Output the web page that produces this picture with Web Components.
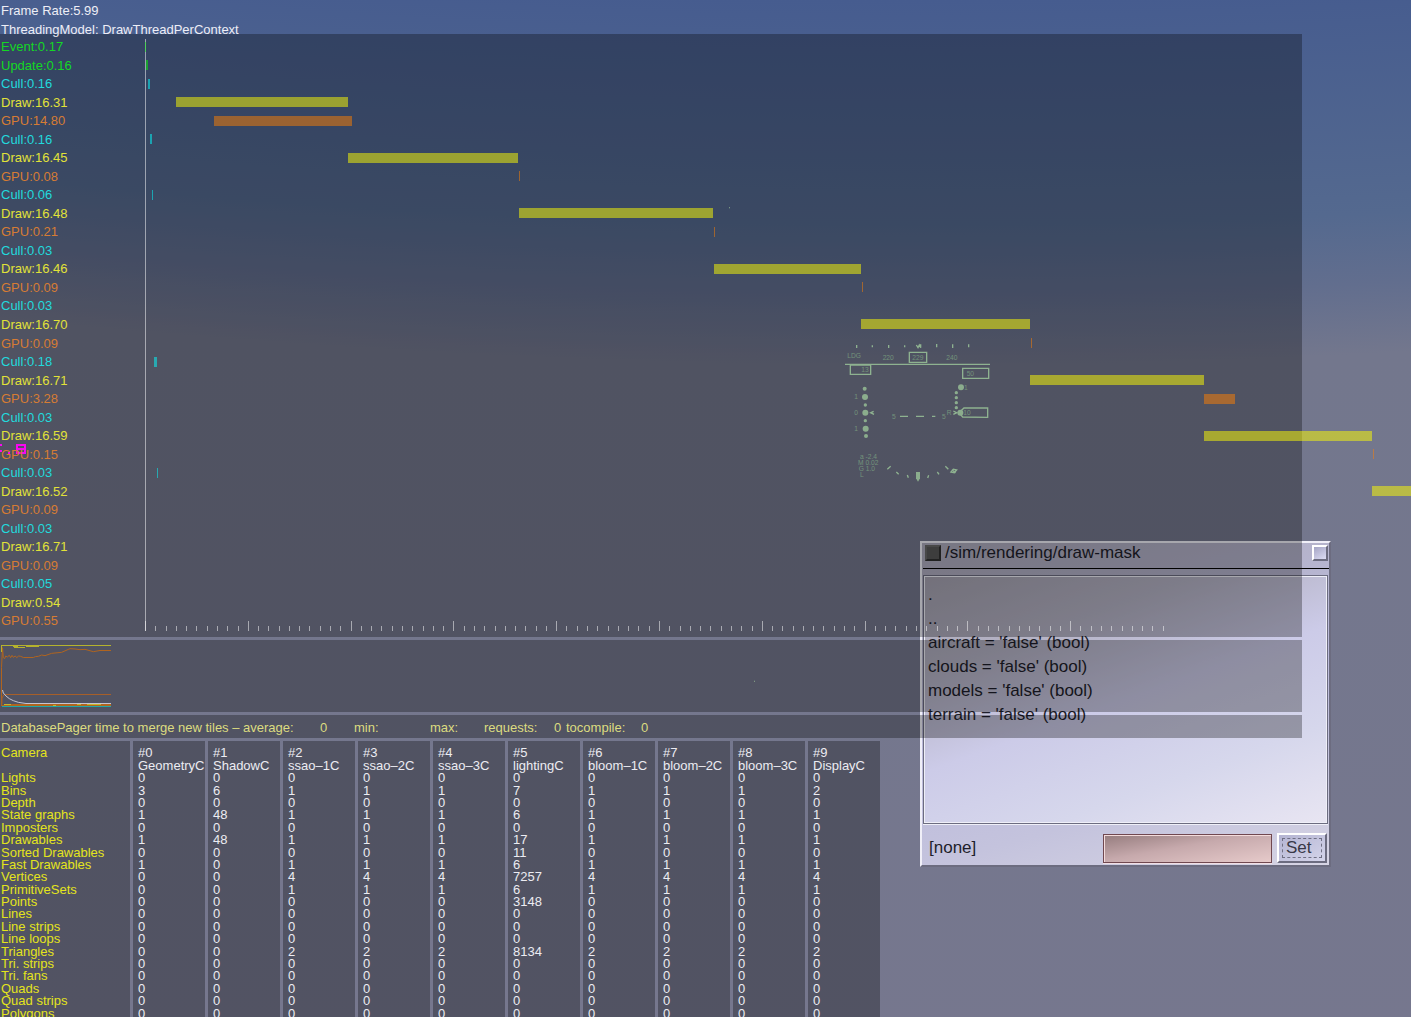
<!DOCTYPE html>
<html lang="en">
<head>
<meta charset="utf-8">
<title>Frame statistics</title>
<style>
html,body{margin:0;height:100%;overflow:hidden}
body{font:13px/18px "Liberation Sans",Arial,sans-serif;--shade:rgba(0,0,0,.3)}
</style>
</head>
<body>
<sim-view>
  <flight-hud slot="world"></flight-hud>
  <property-dialog slot="world" heading="/sim/rendering/draw-mask"></property-dialog>
  <frame-header></frame-header>
  <thread-timeline></thread-timeline>
  <history-graph></history-graph>
  <pager-stats></pager-stats>
  <camera-stats></camera-stats>
</sim-view>
<script>
class Base extends HTMLElement {
  constructor() {
    super();
    this.attachShadow({ mode: 'open' });
  }
  connectedCallback() { this.shadowRoot.innerHTML = this.render(); }
}

customElements.define('sim-view', class extends Base {
  render() {
    return `<style>
      :host{display:block;position:relative;height:100%;overflow:hidden;
        background:radial-gradient(circle at 65% -8635px,#465c8f 8635px,#54698f 8860px,#626e8e 8930px,#73778d 9000px,#76778e 9700px)}
      .stats{position:relative;display:flex;flex-direction:column;gap:3px;pointer-events:none}
    </style>
    <slot name="world"></slot>
    <div class="stats"><slot></slot></div>`;
  }
});

customElements.define('frame-header', class extends Base {
  render() {
    return `<style>
      :host{display:block;height:34px;margin-bottom:-4px;padding:1px 1px 0;box-sizing:content-box;color:#eeeef6;white-space:nowrap;position:relative;z-index:1}
      :host{height:33px;margin-bottom:-3px;line-height:19px}
      p{margin:0}
    </style><p>Frame Rate:5.99</p><p>ThreadingModel: DrawThreadPerContext</p>`;
  }
});

customElements.define('thread-timeline', class extends Base {
  render() {
    const cams = [['0.16','16.31','14.80'],['0.16','16.45','0.08'],['0.06','16.48','0.21'],['0.03','16.46','0.09'],['0.03','16.70','0.09'],
      ['0.18','16.71','3.28'],['0.03','16.59','0.15'],['0.03','16.52','0.09'],['0.03','16.71','0.09'],['0.05','0.54','0.55']];
    const rows = [['event','Event:0.17'],['event','Update:0.16']];
    for (const [c, d, g] of cams) rows.push(['cull','Cull:' + c],['draw','Draw:' + d],['gpu','GPU:' + g]);
    // Each bar: row, start and length along the time axis
    const bars = [[0,0,1],[1,1,2],[2,3,2],[3,31,172],[4,69,138],[5,5,2],[6,203,170],[7,374,1],[8,7,1],[9,374,194],[10,569,1],
      [12,569,147],[13,717,1],[15,716,169],[16,886,1],[17,9,3],[18,885,174],[19,1059,31],[21,1059,168],[22,1228,1],[23,12,1],[24,1227,170]];
    let shapes = bars.map(([r, x, w]) =>
      `<rect class="${rows[r][0]}" x="${x}" y="${Math.floor(593 * r / 32) + 4}" width="${w}" height="10"/>`).join('');
    for (let i = 0; i < 100; i++) {
      const major = i % 10 === 0;
      shapes += `<rect class="tick" x="${Math.round(i * 10.28)}" y="${major ? 583 : 588}" width="1" height="${major ? 10 : 5}"/>`;
    }
    return `<style>
      :host{display:grid;grid-template-columns:145px 1fr;width:calc(100% - 109px);box-sizing:border-box;padding:4px 0 6px;background:var(--shade)}
      ol{list-style:none;margin:0;padding:0 0 0 1px;display:grid;grid-template-rows:repeat(32,1fr);height:593px;z-index:1}
      li{line-height:18px}
      li.event{color:#14d824}li.cull{color:#22dadd}li.draw{color:#e2e238}li.gpu{color:#d67c34}
      svg{display:block;width:100%;height:593px;overflow:visible;shape-rendering:crispEdges}
      rect.event{fill:#00ff00;opacity:.5}rect.cull{fill:#00ffff;opacity:.5}rect.draw{fill:#ffff00;opacity:.5}rect.gpu{fill:#ff8000;opacity:.5}
      .tick,.axis{fill:#fff;opacity:.5}
      .marker{fill:none;stroke:#f808f0;stroke-width:2}
    </style>
    <ol>${rows.map(([k, t]) => `<li class="${k}">${t}</li>`).join('')}</ol>
    <svg aria-hidden="true">
      <path class="marker" d="M-128 407h8v8h-8zM-128 411h8M-145 407h2M-145 413h2M-137 415h2"/>
      <rect class="axis" x="0" y="1" width="1" height="592"/>${shapes}
    </svg>`;
  }
});

customElements.define('history-graph', class extends Base {
  render() {
    return `<style>
      :host{display:block;width:calc(100% - 109px);height:72px;background:var(--shade)}
      svg{display:block}
      path{fill:none;stroke-width:3}
      .flat{shape-rendering:crispEdges}
    </style>
    <svg width="120" height="72" viewBox="0 12 360 216" aria-hidden="true">
      <path stroke="#b0641f" d="M4.5 207V95L7.5 35L10 65L14 68L17 60L22 63L28 58L32 65L36 58L40 64L46 60L50 65L56 60L62 61L70 64.5H100L106 62L115 61L125 57L135 59L155 52L185 49L210 38L225 39L240 41L255 40L280 47L300 43.5H333"/>
      <path stroke="#a65f29" d="M6 205V186L12 175.5H333"/>
      <g class="flat">
      <path stroke="#b5b32d" d="M4.5 47V28.5H333M39 31.5H54M42 34.5H75M77 31.5H117"/>
      <path stroke="#b0651f" d="M4 208.5H333M12 205.5H333"/>
      <path stroke="#c8b52a" d="M12 205.5H33M158 208.5H168M232 205.5H243M261 205.5H302"/>
      <path stroke="#20a8a6" d="M7 211.5H333"/>
      </g>
      <path stroke="#c4c4d2" d="M7.5 162L10 171L18 180L28 188L40 194L55 199L78 202.5H333"/>
    </svg>`;
  }
});

customElements.define('pager-stats', class extends Base {
  render() {
    return `<style>
      :host{display:grid;grid-template-columns:319px 34px 76px 54px 70px 12px 75px auto;align-items:center;width:calc(100% - 109px);
        height:23px;box-sizing:border-box;padding:3px 0 0 1px;background:var(--shade);color:#dcdc80;white-space:nowrap}
    </style>
    <span>DatabasePager time to merge new tiles – average:</span><span>0</span><span>min:</span><span>max:</span>
    <span>requests:</span><span>0</span><span>tocompile:</span><span>0</span>`;
  }
});

customElements.define('camera-stats', class extends Base {
  render() {
    const names = ['GeometryC','ShadowC','ssao–1C','ssao–2C','ssao–3C','lightingC','bloom–1C','bloom–2C','bloom–3C','DisplayC'];
    const z = '0 0 0 0 0 0 0 0 0 0';
    const data = [['Lights',z],['Bins','3 6 1 1 1 7 1 1 1 2'],['Depth',z],['State graphs','1 48 1 1 1 6 1 1 1 1'],['Imposters',z],
      ['Drawables','1 48 1 1 1 17 1 1 1 1'],['Sorted Drawables','0 0 0 0 0 11 0 0 0 0'],['Fast Drawables','1 0 1 1 1 6 1 1 1 1'],
      ['Vertices','0 0 4 4 4 7257 4 4 4 4'],['PrimitiveSets','0 0 1 1 1 6 1 1 1 1'],['Points','0 0 0 0 0 3148 0 0 0 0'],
      ['Lines',z],['Line strips',z],['Line loops',z],['Triangles','0 0 2 2 2 8134 2 2 2 2'],['Tri. strips',z],['Tri. fans',z],
      ['Quads',z],['Quad strips',z],['Polygons',z]];
    return `<style>
      :host{display:block}
      table{border-spacing:0;table-layout:fixed;width:880px;height:279px;line-height:12px;color:#ececf2}
      th,td{padding:0 0 0 5px;font-weight:400;text-align:left;vertical-align:middle;white-space:nowrap;
        background:var(--shade) padding-box;border-right:3px solid transparent}
      th:first-child,td:first-child{padding-left:1px;color:#e4e41c}
      tr>:last-child{border-right:0}
      thead tr:first-child th{padding-top:6px;padding-bottom:1px}
    </style>
    <table>
      <colgroup><col style="width:133px">${'<col style="width:75px">'.repeat(9)}<col style="width:72px"></colgroup>
      <thead>
        <tr><th scope="col">Camera</th>${names.map((n, i) => `<th scope="col">#${i}</th>`).join('')}</tr>
        <tr><td></td>${names.map(n => `<th scope="col">${n}</th>`).join('')}</tr>
      </thead>
      <tbody>${data.map(([k, v]) => `<tr><th scope="row">${k}</th>${v.split(' ').map(c => `<td>${c}</td>`).join('')}</tr>`).join('')}</tbody>
    </table>`;
  }
});

customElements.define('flight-hud', class extends Base {
  render() {
    return `<style>
      :host{position:absolute;left:840px;top:335px}
      svg{display:block;overflow:visible;font:20px "Liberation Sans",sans-serif}
      .l{fill:none;stroke:#ccffce;stroke-width:4}
      .d{fill:#c8f8ca}
      text{fill:#a4d0b0}
    </style>
    <svg width="160" height="150" viewBox="0 0 480 450">
      <path class="l" d="M15 88H450M31 90H92V118H31ZM208 52H260V82H208ZM368 100H446V130H368ZM372 219H443V247L368 246L357 233Z"/>
      <path class="l" d="M50 30V39M97 31V37M146 30V39M194 31V37M290 27V37M338 28V39M386 28V37M229 30L234 38L238 30L242 38V28"/>
      <path class="l" d="M180 244H204M228 244H252M276 244H286M101 229L92 233L102 238M340 228L350 233L340 238"/>
      <path class="l" d="M152 394L142 403M169 411L176 418M202 420L205 428M266 421L263 429M292 411L297 418M316 394L325 403M333 411L340 403L350 405L343 413ZM335 405L347 413"/>
      <path class="d" d="M228 411H240V430L234 440L228 430Z"/>
      <g class="d"><circle cx="74" cy="161" r="6"/><circle cx="75" cy="186" r="9"/><circle cx="76" cy="210" r="5"/><circle cx="76" cy="233" r="9"/><circle cx="76" cy="257" r="5"/><circle cx="77" cy="281" r="9"/><circle cx="78" cy="303" r="6"/>
      <circle cx="363" cy="157" r="9"/><circle cx="349" cy="173" r="5"/><circle cx="349" cy="188" r="5"/><circle cx="349" cy="203" r="5"/><circle cx="349" cy="218" r="5"/><circle cx="361" cy="233" r="9"/></g>
      <text x="22" y="69">LDG</text><text x="128" y="75">220</text><text x="217" y="75">229</text><text x="319" y="75">240</text>
      <text x="64" y="111">13</text><text x="380" y="122">50</text><text x="43" y="192">1</text><text x="43" y="240">0</text><text x="43" y="288">1</text>
      <text x="156" y="251">5</text><text x="306" y="251">5</text><text x="320" y="240">R</text><text x="372" y="164">1</text><text x="370" y="240">10</text>
      <text x="60" y="371">a -2.4</text><text x="54" y="389">M 0.02</text><text x="56" y="407">G 1.0</text><text x="60" y="425">L</text>
      <path class="d" d="M-333-383h3v3h-3zM-258 1037h3v3h-3z"/>
    </svg>`;
  }
});

customElements.define('property-dialog', class extends Base {
  render() {
    return `<style>
      :host{position:absolute;left:920px;top:541px;width:411px;height:326px;box-sizing:border-box;display:flex;flex-direction:column;
        border:2px solid;border-color:#f0eff8 #6c6c80 #6c6c80 #f0eff8;background:linear-gradient(165deg,#adabbc,#bcbbdc 50%,#c4c3dd 75%,#d6d4e4);
        font:17px/24px "Liberation Sans",Arial,sans-serif;color:#1e1e2a}
      button{font:inherit;color:inherit;margin:0;padding:0;box-sizing:border-box;border:2px solid;border-color:#fff #6c6c80 #6c6c80 #fff}
      header{display:flex;align-items:flex-start;gap:4px;height:26px;padding:2px 1px 0 2px;margin:0 0 0 1px;border-bottom:1px solid #000;box-sizing:border-box}
      header button{width:16px;height:16px;background:linear-gradient(150deg,#a4a4c4,#dcdcf4)}
      header .min{background:#585858;border-color:#686868 #303030 #303030 #686868}
      h1{flex:1;margin:0;font:inherit;line-height:16px}
      ul{list-style:none;flex:1;margin:6px 1px 0 1px;padding:7px 4px;border:1px solid #6c6c80;
        box-shadow:inset 1px 1px #efeff8,inset -1px -1px #efeff8,0 1px #efeff8;background:linear-gradient(160deg,#a5a2b0,#b4b2c4 25%,#cccbe8 50%,#d6d7ec 75%,#e8e5f2)}
      form{display:flex;align-items:center;gap:5px;padding:9px 2px 2px 7px}
      label{flex:1}
      input{width:169px;height:29px;box-sizing:border-box;border:1px solid #704850;margin:0;padding:0 4px;font:inherit;
        box-shadow:inset 1px 1px #f4dcdc,0 1px #f0dfe4;background:linear-gradient(170deg,#957c7e,#c6a9ac 45%,#e6caca)}
      form button{width:50px;height:30px;padding:2px 3px;background:linear-gradient(150deg,#b4b4d2,#d4d4ea)}
      form span{display:block;border:1px dashed #707084;line-height:18px;color:#383846;text-align:left;padding-left:3px}
    </style>
    <header><button class="min" aria-label="Options"></button><h1>${this.getAttribute('heading')}</h1><button aria-label="Close"></button></header>
    <ul><li>.</li><li>..</li><li>aircraft = 'false' (bool)</li><li>clouds = 'false' (bool)</li><li>models = 'false' (bool)</li><li>terrain = 'false' (bool)</li></ul>
    <form><label for="value">[none]</label><input id="value" type="text"><button type="button"><span>Set</span></button></form>`;
  }
});
</script>
</body>
</html>
